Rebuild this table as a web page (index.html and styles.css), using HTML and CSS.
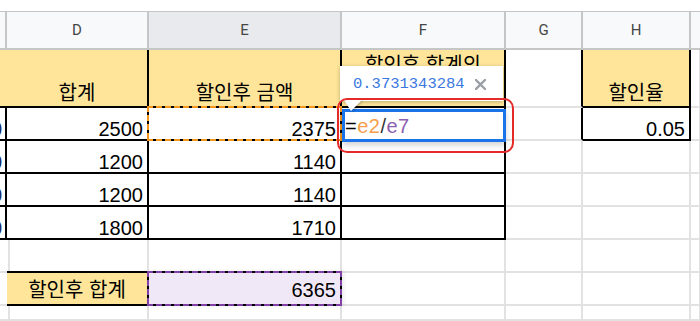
FILE: index.html
```html
<!DOCTYPE html>
<html lang="ko">
<head>
<meta charset="utf-8">
<title>Sheet</title>
<link rel="stylesheet" href="styles.css">
</head>
<body>
<div class="screen">
  <div class="top"></div>
  <div class="sheet">
    <!-- column headers -->
    <div class="h"></div>
    <div class="h">D</div>
    <div class="h sel">E</div>
    <div class="h">F</div>
    <div class="h">G</div>
    <div class="h">H</div>
    <div class="h last"></div>

    <!-- row 1 -->
    <div class="c y br bb"></div>
    <div class="c y br bb ko mid">합계</div>
    <div class="c y br bb ko mid">할인후 금액</div>
    <div class="c y br bb ko mid wrap">할인후 합계의<br>비율</div>
    <div class="c br"></div>
    <div class="c y br bb ko mid">할인율</div>
    <div class="c"></div>

    <!-- row 2 -->
    <div class="c br bb num edge">0</div>
    <div class="c br bb num">2500</div>
    <div class="c br bb num marq">2375</div>
    <div class="c br bb edit-host">
      <div class="editor"><span class="eq">=</span><span class="r1">e2</span><span class="op">/</span><span class="r2">e7</span></div>
    </div>
    <div class="c br"></div>
    <div class="c br bb num">0.05</div>
    <div class="c"></div>

    <!-- row 3 -->
    <div class="c br bb num edge">0</div>
    <div class="c br bb num">1200</div>
    <div class="c br bb num">1140</div>
    <div class="c br bb"></div>
    <div class="c"></div>
    <div class="c"></div>
    <div class="c"></div>

    <!-- row 4 -->
    <div class="c br bb num edge">0</div>
    <div class="c br bb num">1200</div>
    <div class="c br bb num">1140</div>
    <div class="c br bb"></div>
    <div class="c"></div>
    <div class="c"></div>
    <div class="c"></div>

    <!-- row 5 -->
    <div class="c br bb num edge">0</div>
    <div class="c br bb num">1800</div>
    <div class="c br bb num">1710</div>
    <div class="c br bb"></div>
    <div class="c"></div>
    <div class="c"></div>
    <div class="c"></div>

    <!-- row 6 -->
    <div class="c"></div>
    <div class="c bb"></div>
    <div class="c bb"></div>
    <div class="c"></div>
    <div class="c"></div>
    <div class="c"></div>
    <div class="c"></div>

    <!-- row 7 -->
    <div class="c br"></div>
    <div class="c y br bb ko mid total">할인후 합계</div>
    <div class="c br bb num total purple">6365</div>
    <div class="c"></div>
    <div class="c"></div>
    <div class="c"></div>
    <div class="c"></div>

    <!-- row 8 -->
    <div class="c"></div>
    <div class="c"></div>
    <div class="c"></div>
    <div class="c"></div>
    <div class="c"></div>
    <div class="c"></div>
    <div class="c"></div>
  </div>

  <div class="popup">
    <span class="val">0.3731343284</span>
    <svg class="close" width="11" height="11" viewBox="0 0 11 11"><path d="M1 1L10 10M10 1L1 10" stroke="#9aa0a6" stroke-width="2.4" stroke-linecap="square"/></svg>
  </div>
  <svg class="tip" width="22" height="12" viewBox="0 0 22 12"><polygon points="2,0 20,0 9,11" fill="#fff"/></svg>
  <div class="ring"></div>
</div>
</body>
</html>
```

FILE: styles.css
```css
* { box-sizing: border-box; }

body {
  margin: 0;
  background: #fff;
  font-family: "Liberation Sans", Arial, "Noto Sans CJK KR", sans-serif;
}

.screen {
  position: relative;
  width: 700px;
  height: 321px;
  overflow: hidden;
  background: #fff;
}

.top { height: 11px; }

.sheet {
  display: grid;
  grid-template-columns: 7px 142px 193px 164px 77px 108px 9px;
  grid-template-rows: 39px 58px repeat(6, 33px) 15px;
}

.h {
  display: flex;
  align-items: center;
  justify-content: center;
  background: #f8f9fa;
  border-top: 1px solid #c4c7c5;
  border-right: 2px solid #c4c7c5;
  border-bottom: 2px solid #c4c7c5;
  font-family: Roboto, "Liberation Sans", sans-serif;
  font-size: 15px;
  color: #444746;
}
.h.sel { background: #e8eaed; }
.h.last { border-right: none; }

.c {
  position: relative;
  display: flex;
  align-items: flex-end;
  justify-content: flex-end;
  padding: 0 4px 0 4px;
  border-right: 2px solid #e2e2e2;
  border-bottom: 2px solid #e2e2e2;
  font-size: 20px;
  line-height: 20px;
  color: #000;
  white-space: nowrap;
  overflow: hidden;
}

.edge {
  padding: 0 3px 0 0;
  color: #1f2a66;
}

.br { border-right-color: #000; }
.bb { border-bottom-color: #000; }
.y { background: #fee599; }

.ko {
  font-family: "Noto Sans CJK KR", "Liberation Sans", sans-serif;
  line-height: 26px;
  padding-bottom: 1px;
}
.mid { justify-content: center; }
.wrap {
  white-space: normal;
  text-align: center;
  align-items: flex-start;
  padding: 1px 4px 0;
}

.total {
  align-items: center;
  padding-top: 2px;
}

.purple { background: #f1e8f7; overflow: visible; }

.marq { overflow: visible; }

.marq::after,
.purple::after {
  content: "";
  position: absolute;
  inset: -2px;
  z-index: 2;
  background:
    repeating-linear-gradient(90deg, var(--dash) 0 6px, transparent 6px 9px) top / 100% 2px no-repeat,
    repeating-linear-gradient(90deg, var(--dash) 0 6px, transparent 6px 9px) bottom / 100% 2px no-repeat,
    repeating-linear-gradient(180deg, var(--dash) 0 6px, transparent 6px 9px) left / 2px 100% no-repeat,
    repeating-linear-gradient(180deg, var(--dash) 0 6px, transparent 6px 9px) right / 2px 100% no-repeat;
}
.marq { --dash: #f5961f; }
.purple { --dash: #8241a6; }
.purple::after { box-shadow: 2px 0 4px rgba(0,0,0,0.08); }

.edit-host { overflow: visible; z-index: 3; }

.editor {
  position: absolute;
  left: 0;
  top: 1px;
  width: 164px;
  height: 33px;
  border: 3px solid #1a73e8;
  background: #fff;
  box-shadow: 0 3px 6px rgba(0,0,0,0.18);
  display: flex;
  align-items: center;
  padding: 1px 0 0 0;
  font-size: 20px;
  line-height: 20px;
  letter-spacing: 0.5px;
}
.eq { color: #000; }
.r1 { color: #f6a04c; }
.op { color: #333; }
.r2 { color: #8c5fb0; }

.popup {
  position: absolute;
  left: 340px;
  top: 66px;
  width: 163px;
  height: 35px;
  background: #fff;
  box-shadow: 0 1px 4px rgba(0,0,0,0.25);
  z-index: 5;
  display: flex;
  align-items: center;
  padding: 1px 0 0 13px;
}
.val {
  font-family: "Liberation Mono", "DejaVu Sans Mono", monospace;
  font-size: 15.5px;
  color: #3a78e0;
}
.close { margin-left: 10px; }

.tip {
  position: absolute;
  left: 342px;
  top: 100px;
  z-index: 6;
  filter: drop-shadow(1px 1px 1px rgba(0,0,0,0.25));
}

.ring {
  position: absolute;
  left: 337px;
  top: 98px;
  width: 177px;
  height: 55px;
  border: 2px solid #e52a2a;
  border-radius: 10px;
  z-index: 7;
}
```
